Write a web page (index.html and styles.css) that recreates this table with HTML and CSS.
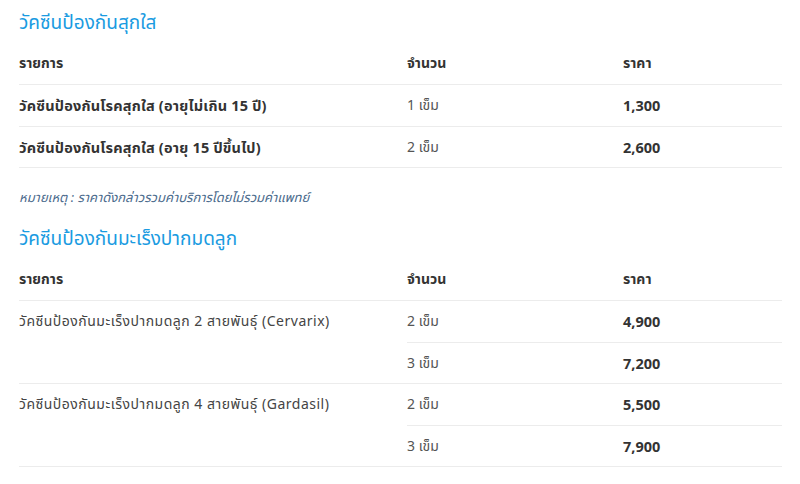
FILE: index.html
```html
<!DOCTYPE html>
<html lang="th">
  <head>
    <meta charset="UTF-8" />
    <meta name="viewport" content="width=device-width, initial-scale=1.0" />
    <title>ราคาวัคซีน</title>
    <link rel="stylesheet" href="styles.css">
  </head>
  <body>
    <div class="price-list">
      <h2 class="section-title first">วัคซีนป้องกันสุกใส</h2>
      <table class="price-table">
        <colgroup>
          <col class="col-name" />
          <col class="col-qty" />
          <col class="col-price" />
        </colgroup>
        <tr class="head">
          <th>รายการ</th>
          <th>จำนวน</th>
          <th>ราคา</th>
        </tr>
        <tr>
          <td class="name strong">วัคซีนป้องกันโรคสุกใส (อายุไม่เกิน 15 ปี)</td>
          <td class="qty">1 เข็ม</td>
          <td class="price">1,300</td>
        </tr>
        <tr>
          <td class="name strong">วัคซีนป้องกันโรคสุกใส (อายุ 15 ปีขึ้นไป)</td>
          <td class="qty">2 เข็ม</td>
          <td class="price">2,600</td>
        </tr>
      </table>
      <p class="note">หมายเหตุ : ราคาดังกล่าวรวมค่าบริการโดยไม่รวมค่าแพทย์</p>

      <h2 class="section-title">วัคซีนป้องกันมะเร็งปากมดลูก</h2>
      <table class="price-table">
        <colgroup>
          <col class="col-name" />
          <col class="col-qty" />
          <col class="col-price" />
        </colgroup>
        <tr class="head">
          <th>รายการ</th>
          <th>จำนวน</th>
          <th>ราคา</th>
        </tr>
        <tr>
          <td class="name" rowspan="2">วัคซีนป้องกันมะเร็งปากมดลูก 2 สายพันธุ์ (Cervarix)</td>
          <td class="qty">2 เข็ม</td>
          <td class="price">4,900</td>
        </tr>
        <tr>
          <td class="qty">3 เข็ม</td>
          <td class="price">7,200</td>
        </tr>
        <tr>
          <td class="name" rowspan="2">วัคซีนป้องกันมะเร็งปากมดลูก 4 สายพันธุ์ (Gardasil)</td>
          <td class="qty">2 เข็ม</td>
          <td class="price">5,500</td>
        </tr>
        <tr>
          <td class="qty">3 เข็ม</td>
          <td class="price">7,900</td>
        </tr>
      </table>
    </div>
  </body>
</html>
```

FILE: styles.css
```css
* {
  box-sizing: border-box;
}

body {
  margin: 0;
  background: #ffffff;
  color: #333333;
  font-family: "Noto Sans", "Noto Sans Thai", "Noto Sans CJK SC", sans-serif;
  font-size: 14px;
}

.price-list {
  padding: 0 18px 0 19px;
}

.section-title {
  margin: 19px 0 7px;
  font-size: 19px;
  line-height: 27px;
  font-weight: 400;
  color: #1a9be1;
}
.section-title.first {
  margin-top: 9px;
}

.price-table {
  width: 763px;
  border-collapse: collapse;
  table-layout: fixed;
}
.price-table .col-name {
  width: 388px;
}
.price-table .col-qty {
  width: 216px;
}
.price-table .col-price {
  width: 159px;
}
.price-table th,
.price-table td {
  height: 41.5px;
  padding: 10px 0;
  line-height: 20px;
  text-align: left;
  vertical-align: top;
  border-bottom: 1px solid #ececec;
}
.price-table th {
  font-weight: 700;
  color: #333333;
}
.price-table .name {
  font-size: 14px;
  letter-spacing: 0.5px;
  color: #444444;
}
.price-table .name.strong {
  font-size: 14.5px;
  font-weight: 700;
  letter-spacing: 0.2px;
  color: #333333;
}
.price-table .qty {
  color: #555555;
}
.price-table .price {
  font-weight: 700;
  font-size: 14.5px;
  color: #333333;
}

.note {
  margin: 20px 0 0;
  font-size: 13px;
  line-height: 18px;
  font-style: italic;
  color: #4a6a8c;
}
```
